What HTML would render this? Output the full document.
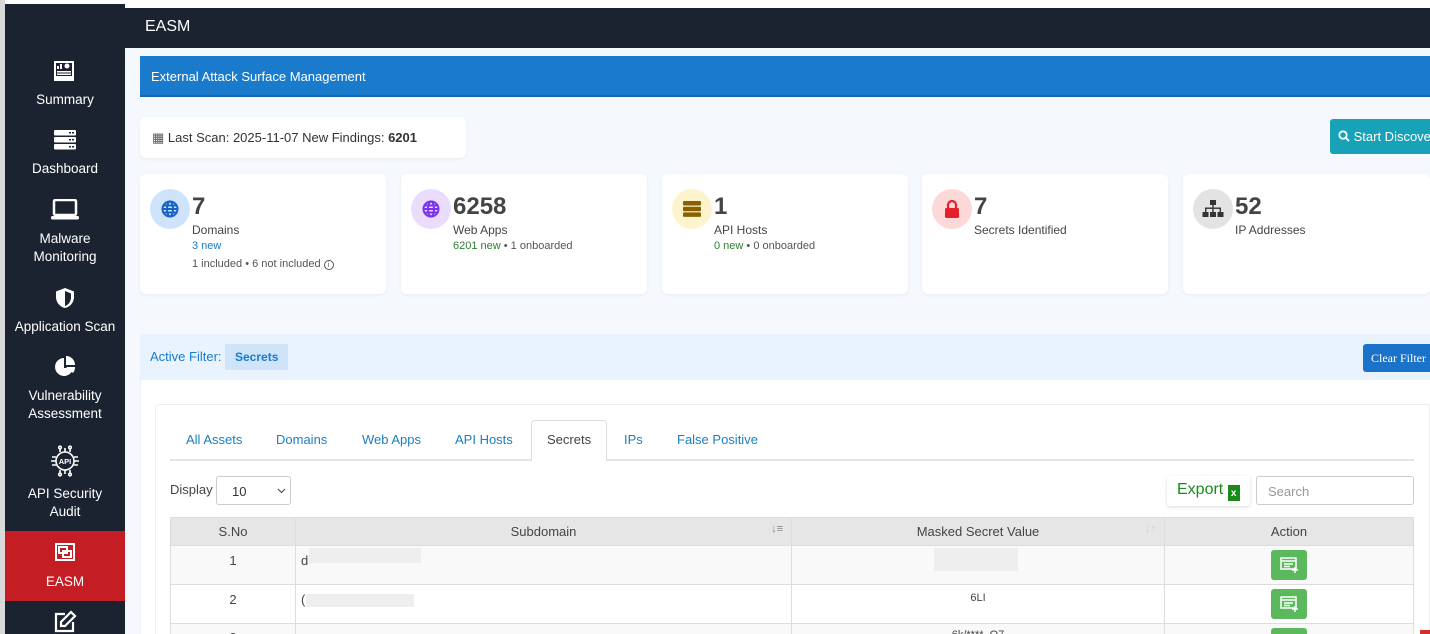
<!DOCTYPE html>
<html style="width:1430px;height:634px;overflow:hidden"><head><meta charset="utf-8"><style>
*{box-sizing:border-box;margin:0;padding:0}
body{width:1430px;height:634px;overflow:hidden;position:relative;background:#f5f9fd;font-family:"Liberation Sans",Arial,sans-serif;color:#333}
.a{position:absolute}
.side{left:5px;top:4px;width:120px;height:630px;background:#1c2330}
.si{position:absolute;left:0;width:120px;text-align:center;color:#fff;font-size:13.5px;line-height:18px}
.card{background:#fff;border-radius:6px;box-shadow:0 1px 3px rgba(0,0,0,.06)}
.circ{position:absolute;left:10px;top:15px;width:40px;height:40px;border-radius:50%;display:flex;align-items:center;justify-content:center}
.num{position:absolute;left:52px;top:19px;font-size:24px;font-weight:bold;color:#444}
.lbl{position:absolute;left:52px;top:49px;font-size:12px;color:#444}
.sub{position:absolute;left:52px;top:66px;font-size:11px;color:#555}
.tab{position:absolute;top:432px;font-size:13px;color:#1a7fc1}
th,td{border:1px solid #ddd;font-size:13px;font-weight:normal;text-align:center}
.gb{display:inline-block;width:36px;height:30px;background:#5cb85c;border-radius:3px;margin-top:4px;position:relative}
.blur{position:absolute;background:#eee}
</style></head><body>
<div class="a" style="left:0;top:0;width:5px;height:634px;background:#d9d9d9"></div>
<div class="a" style="left:5px;top:0;width:1425px;height:8px;background:#fff"></div>
<div class="a side">
  <svg class="a" style="left:48px;top:56px" width="22" height="22" viewBox="0 0 22 22"><rect x="1" y="1" width="20" height="18" fill="#fff"/><rect x="3" y="3" width="16" height="13" fill="#1c2330"/><rect x="4" y="6" width="2" height="3" fill="#fff"/><rect x="7" y="4" width="2" height="5" fill="#fff"/><circle cx="14" cy="6" r="2.5" fill="#fff"/><rect x="4" y="11" width="14" height="1.5" fill="#fff"/><rect x="4" y="13.5" width="14" height="1.5" fill="#fff"/><rect x="1" y="19" width="20" height="2" fill="#fff"/></svg>
  <div class="si" style="top:87px">Summary</div>
  <svg class="a" style="left:49px;top:126px" width="22" height="20" viewBox="0 0 22 20"><rect x="0" y="0" width="22" height="5.5" rx="1" fill="#fff"/><rect x="0" y="7" width="22" height="5.5" rx="1" fill="#fff"/><rect x="0" y="14" width="22" height="5.5" rx="1" fill="#fff"/><rect x="15" y="2" width="2" height="1.5" fill="#1c2330"/><rect x="18" y="2" width="2" height="1.5" fill="#1c2330"/><rect x="15" y="9" width="2" height="1.5" fill="#1c2330"/><rect x="18" y="9" width="2" height="1.5" fill="#1c2330"/><rect x="15" y="16" width="2" height="1.5" fill="#1c2330"/><rect x="18" y="16" width="2" height="1.5" fill="#1c2330"/></svg>
  <div class="si" style="top:156px">Dashboard</div>
  <svg class="a" style="left:46px;top:195px" width="28" height="22" viewBox="0 0 28 22"><rect x="3" y="1" width="22" height="15" rx="1.5" fill="none" stroke="#fff" stroke-width="2.5"/><rect x="0" y="17" width="28" height="3.5" rx="1.5" fill="#fff"/></svg>
  <div class="si" style="top:226px">Malware<br>Monitoring</div>
  <svg class="a" style="left:50px;top:283px" width="20" height="22" viewBox="0 0 20 22"><path d="M10 1L1 4.5V10c0 5.5 4 10 9 11 5-1 9-5.5 9-11V4.5z" fill="#fff"/><path d="M10 4v15c3.5-1 6-4.5 6-9V6.5z" fill="#1c2330"/></svg>
  <div class="si" style="top:314px">Application Scan</div>
  <svg class="a" style="left:49px;top:352px" width="24" height="22" viewBox="0 0 24 22"><path d="M10 2a9 9 0 1 0 9 10H10z" fill="#fff"/><path d="M12 0v9h9A9 9 0 0 0 12 0z" fill="#fff"/><path d="M12 11l7 6a9 9 0 0 0 2-6z" fill="#fff"/></svg>
  <div class="si" style="top:383px">Vulnerability<br>Assessment</div>
  <svg class="a" style="left:44px;top:441px" width="32" height="32" viewBox="0 0 32 32" fill="none" stroke="#fff" stroke-width="1.6"><circle cx="16" cy="16" r="9"/><text x="16" y="19" font-size="7.5" font-family="Liberation Sans" font-weight="bold" fill="#fff" stroke="none" text-anchor="middle">API</text><path d="M11 7V3M16 7V3M21 7V3M11 25v4M16 25v4M21 25v4M7 12H3M7 16H2M7 20H3M25 12h4M25 16h5M25 20h4"/><circle cx="11" cy="2.5" r="1.3"/><circle cx="21" cy="2.5" r="1.3"/><circle cx="11" cy="29.5" r="1.3"/><circle cx="21" cy="29.5" r="1.3"/></svg>
  <div class="si" style="top:481px">API Security<br>Audit</div>
  <div class="a" style="left:0;top:527px;width:120px;height:70px;background:#c41e24"></div>
  <svg class="a" style="left:49px;top:538px" width="22" height="20" viewBox="0 0 22 20" fill="none" stroke="#fff" stroke-width="2"><rect x="2" y="2" width="18" height="16"/><rect x="5" y="5" width="8" height="6"/><rect x="9" y="9" width="8" height="6"/></svg>
  <div class="si" style="top:569px">EASM</div>
  <svg class="a" style="left:48px;top:606px" width="24" height="24" viewBox="0 0 24 24" fill="none" stroke="#fff" stroke-width="2.2"><path d="M12 4H3v17h17v-9"/><path d="M18 2l4 4-10 10H8v-4z"/></svg>
</div>
<div class="a" style="left:125px;top:8px;width:1305px;height:40px;background:#1c2330;color:#fff;font-size:16px;padding:10px 0 0 20px">EASM</div>
<div class="a" style="left:140px;top:56px;width:1290px;height:41px;background:#1a7bcc;border-bottom:2px solid #1468b0;color:#fff;font-size:13px;padding:13px 0 0 11px">External Attack Surface Management</div>
<div class="a card" style="left:140px;top:117px;width:326px;height:41px;font-size:13px;padding:13px 0 0 12px;color:#333"><span style="color:#555">&#9638;</span> Last Scan: 2025-11-07 New Findings: <b>6201</b></div>
<div class="a" style="left:1330px;top:119px;width:110px;height:35px;background:#17a2b8;border-radius:3px;color:#fff;font-size:13px;padding:10px 0 0 8px;white-space:nowrap"><svg width="12" height="12" viewBox="0 0 12 12" style="vertical-align:-1px" fill="none" stroke="#fff" stroke-width="1.8"><circle cx="5" cy="5" r="3.7"/><path d="M8 8l3 3"/></svg> Start Discovery</div>

<div class="a card" style="left:140px;top:174px;width:246px;height:120px">
  <div class="circ" style="background:#cfe4fb"><svg width="18" height="18" viewBox="0 0 18 18" fill="none" stroke="#1763c4" stroke-width="2"><circle cx="9" cy="9" r="7.5"/><ellipse cx="9" cy="9" rx="3" ry="7.5"/><path d="M1.5 9h15M2.5 5.5h13M2.5 12.5h13"/></svg></div>
  <div class="num">7</div><div class="lbl">Domains</div>
  <div class="sub" style="color:#1a7bcc">3 new</div>
  <div class="sub" style="top:84px">1 included • 6 not included <span style="display:inline-block;width:10px;height:10px;border:1px solid #555;border-radius:50%;font-size:7px;text-align:center;line-height:9px">i</span></div>
</div>
<div class="a card" style="left:401px;top:174px;width:246px;height:120px">
  <div class="circ" style="background:#eadcfc"><svg width="18" height="18" viewBox="0 0 18 18" fill="none" stroke="#7b2ff0" stroke-width="2"><circle cx="9" cy="9" r="7.5"/><ellipse cx="9" cy="9" rx="3" ry="7.5"/><path d="M1.5 9h15M2.5 5.5h13M2.5 12.5h13"/></svg></div>
  <div class="num">6258</div><div class="lbl">Web Apps</div>
  <div class="sub"><span style="color:#2e7d32">6201 new</span> • 1 onboarded</div>
</div>
<div class="a card" style="left:662px;top:174px;width:246px;height:120px">
  <div class="circ" style="background:#fdf3cd"><svg width="18" height="16" viewBox="0 0 18 16"><rect y="0" width="18" height="4.5" rx="1" fill="#8a6100"/><rect y="5.7" width="18" height="4.5" rx="1" fill="#8a6100"/><rect y="11.4" width="18" height="4.5" rx="1" fill="#8a6100"/></svg></div>
  <div class="num">1</div><div class="lbl">API Hosts</div>
  <div class="sub"><span style="color:#2e7d32">0 new</span> • 0 onboarded</div>
</div>
<div class="a card" style="left:922px;top:174px;width:246px;height:120px">
  <div class="circ" style="background:#fdd8d8"><svg width="16" height="18" viewBox="0 0 16 18"><path d="M4 8V5a4 4 0 0 1 8 0v3" fill="none" stroke="#e3202a" stroke-width="2.2"/><rect x="1" y="8" width="14" height="10" rx="1.5" fill="#e3202a"/></svg></div>
  <div class="num">7</div><div class="lbl">Secrets Identified</div>
</div>
<div class="a card" style="left:1183px;top:174px;width:247px;height:120px">
  <div class="circ" style="background:#e3e3e3"><svg width="22" height="18" viewBox="0 0 22 18" fill="#333"><rect x="8" y="0" width="6" height="5"/><rect x="10.3" y="5" width="1.4" height="3"/><rect x="3" y="7.5" width="16" height="1.4"/><rect x="3" y="8" width="1.4" height="4"/><rect x="17.6" y="8" width="1.4" height="4"/><rect x="10.3" y="8" width="1.4" height="4"/><rect x="0.5" y="12" width="6" height="5"/><rect x="8" y="12" width="6" height="5"/><rect x="15.5" y="12" width="6" height="5"/></svg></div>
  <div class="num">52</div><div class="lbl">IP Addresses</div>
</div>

<div class="a" style="left:140px;top:334px;width:1290px;height:46px;background:#e8f3fd;font-size:13px;color:#1a7bcc;padding:15px 0 0 10px">Active Filter:</div>
<div class="a" style="left:225px;top:344px;width:63px;height:26px;background:#cfe4f8;color:#1a7bcc;font-size:12px;font-weight:bold;padding:6px 0 0 10px">Secrets</div>
<div class="a" style="left:1363px;top:344px;width:75px;height:28px;background:#1a73c9;border-radius:3px;color:#fff;font-family:'Liberation Serif',serif;font-size:12px;padding:7px 0 0 8px;white-space:nowrap">Clear Filter</div>

<div class="a" style="left:140px;top:380px;width:1290px;height:254px;background:#fff;border-left:1px solid #eef1f4"></div>
<div class="a" style="left:155px;top:404px;width:1275px;height:230px;background:#fff;border:1px solid #eee;border-bottom:none;border-radius:4px 0 0 0"></div>
<div class="a" style="left:170px;top:459px;width:1244px;height:2px;background:#e5e5e5"></div>
<div class="a" style="left:531px;top:420px;width:76px;height:41px;background:#fff;border:1px solid #ddd;border-bottom:none;border-radius:4px 4px 0 0"></div>
<div class="tab" style="left:186px">All Assets</div>
<div class="tab" style="left:276px">Domains</div>
<div class="tab" style="left:362px">Web Apps</div>
<div class="tab" style="left:455px">API Hosts</div>
<div class="tab" style="left:547px;color:#444">Secrets</div>
<div class="tab" style="left:624px">IPs</div>
<div class="tab" style="left:677px">False Positive</div>

<div class="a" style="left:170px;top:482px;font-size:13px;color:#444">Display</div>
<div class="a" style="left:216px;top:476px;width:75px;height:29px;border:1px solid #ccc;border-radius:3px;font-size:13px;padding:7px 0 0 15px">10<svg class="a" style="left:60px;top:11px" width="9" height="6" viewBox="0 0 9 6" fill="none" stroke="#555" stroke-width="1.2"><path d="M1 1l3.5 3.5L8 1"/></svg></div>
<div class="a" style="left:1167px;top:476px;width:83px;height:30px;background:#fff;border-radius:3px;box-shadow:0 1px 3px rgba(0,0,0,.15);color:#1a8a1a;font-size:16px;padding:5px 0 0 10px">Export <span style="display:inline-block;width:12px;height:16px;background:#1a8a1a;color:#fff;font-size:10px;font-weight:bold;text-align:center;line-height:18px;vertical-align:-2px">x</span></div>
<div class="a" style="left:1256px;top:476px;width:158px;height:29px;border:1px solid #ccc;border-radius:3px;font-size:13px;color:#999;padding:7px 0 0 11px">Search</div>

<div class="a" style="left:170px;top:517px;width:1244px;height:117px;overflow:hidden">
<table style="width:1244px;border-collapse:collapse;color:#444">
<tr style="background:#e6e6e6;height:28px"><th style="width:125px">S.No</th><th style="width:496px;position:relative">Subdomain<span style="position:absolute;right:8px;top:5px;color:#888;font-size:11px">↓≡</span></th><th style="width:373px;position:relative">Masked Secret Value<span style="position:absolute;right:8px;top:5px;color:#ccc;font-size:11px">↓↑</span></th><th>Action</th></tr>
<tr style="background:#f9f9f9;height:39px;vertical-align:top"><td style="padding-top:7px">1</td><td style="text-align:left;padding:7px 0 0 5px;position:relative">d<div class="blur" style="left:13px;top:2px;width:112px;height:15px"></div></td><td style="position:relative"><div class="blur" style="left:142px;top:2px;width:84px;height:23px"></div></td><td><span class="gb"><svg class="a" style="left:9px;top:7px" width="19" height="16" viewBox="0 0 19 16" fill="none" stroke="#fff" stroke-width="1.5"><rect x="1" y="1" width="15" height="11"/><path d="M1 4h15M4 7h9M4 9.5h6M15 10v6M12 13h6"/></svg></span></td></tr>
<tr style="background:#fff;height:39px;vertical-align:top"><td style="padding-top:7px">2</td><td style="text-align:left;padding:7px 0 0 5px;position:relative">(<div class="blur" style="left:10px;top:9px;width:108px;height:13px"></div></td><td style="padding-top:7px;font-size:11px">6LI</td><td><span class="gb"><svg class="a" style="left:9px;top:7px" width="19" height="16" viewBox="0 0 19 16" fill="none" stroke="#fff" stroke-width="1.5"><rect x="1" y="1" width="15" height="11"/><path d="M1 4h15M4 7h9M4 9.5h6M15 10v6M12 13h6"/></svg></span></td></tr>
<tr style="background:#f9f9f9;height:39px;vertical-align:top"><td style="padding-top:6px">3</td><td></td><td style="padding-top:5px;font-size:11px">6k/****_Q7</td><td><span class="gb"></span></td></tr>
</table></div>
<div class="a" style="left:1420px;top:630px;width:10px;height:4px;background:#d32f2f"></div>
</body></html>
